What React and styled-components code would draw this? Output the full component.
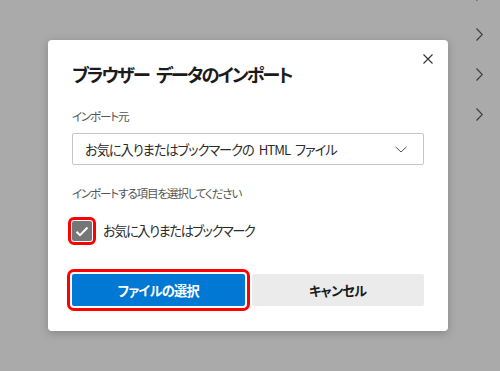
import React from "react";
import styled, { createGlobalStyle } from "styled-components";

const Global = createGlobalStyle`
  html, body { margin: 0; padding: 0; }
  body {
    background: #aaaaaa;
    font-family: "Noto Sans CJK JP", "Noto Sans", sans-serif;
    font-feature-settings: "palt" 1;
    overflow: hidden;
  }
`;

const Page = styled.div`
  width: 500px;
  height: 371px;
  display: flex;
  align-items: flex-start;
`;

const Dialog = styled.div`
  position: relative;
  box-sizing: border-box;
  width: 400px;
  height: 291px;
  margin: 40px 0 0 48px;
  padding: 20px 24px 24px;
  background: #ffffff;
  border-radius: 4px;
  box-shadow: 0 2px 10px rgba(0, 0, 0, 0.22);
  display: flex;
  flex-direction: column;
`;

const Title = styled.h1`
  margin: 0;
  font-size: 18.3px;
  line-height: 28px;
  font-weight: 700;
  color: #1b1b1b;
  letter-spacing: -2px;
  word-spacing: 5px;
`;

const CloseButton = styled.button`
  position: absolute;
  top: 9px;
  right: 11px;
  width: 19px;
  height: 19px;
  padding: 0;
  border: none;
  background: transparent;
  display: flex;
  align-items: center;
  justify-content: center;
  cursor: pointer;
`;

const FieldLabel = styled.div`
  margin-top: ${(p) => p.$top}px;
  font-size: 11.6px;
  line-height: 18px;
  color: #555555;
  letter-spacing: -1.2px;
`;

const Select = styled.div`
  box-sizing: border-box;
  margin-top: 8px;
  height: 32px;
  border: 1px solid #c6c6c6;
  border-radius: 2px;
  display: flex;
  align-items: center;
  justify-content: space-between;
  padding: 0 16px 0 12px;
  font-size: 13.2px;
  letter-spacing: -1px;
  word-spacing: 3px;
  color: #2b2b2b;
`;

const CheckRow = styled.label`
  margin-top: 19px;
  display: flex;
  align-items: center;
  gap: 11px;
  font-size: 13.2px;
  letter-spacing: -1.4px;
  color: #2b2b2b;
  line-height: 20px;
`;

const CheckBox = styled.span`
  box-sizing: border-box;
  width: 20px;
  height: 20px;
  border-radius: 2px;
  background: #767676;
  display: flex;
  align-items: center;
  justify-content: center;
  outline: 3px solid #ff0000;
  outline-offset: 1px;
`;

const Buttons = styled.div`
  margin-top: 33px;
  display: grid;
  grid-template-columns: 1fr 1fr;
  gap: 7px;
`;

const Button = styled.button`
  height: 32px;
  border: none;
  border-radius: 2px;
  font-family: inherit;
  font-feature-settings: "palt" 1;
  font-size: 13.2px;
  letter-spacing: -0.7px;
  font-weight: 700;
  background: ${(p) => (p.$primary ? "#0078d4" : "#ebebeb")};
  color: ${(p) => (p.$primary ? "#ffffff" : "#1b1b1b")};
  outline: ${(p) => (p.$highlight ? "3px solid #ff0000" : "none")};
  outline-offset: 2px;
  padding: 0;
`;

const ChevronList = styled.div`
  margin: -12px 17px 0 auto;
  display: flex;
  flex-direction: column;
  gap: 27px;
`;

const Chevron = () => (
  <svg width="7" height="13" viewBox="0 0 7 13">
    <path d="M0.5 0.5 L6.3 6.5 L0.5 12.5" fill="none" stroke="#3a3a3a" strokeWidth="1.1" />
  </svg>
);

export default function App() {
  return (
    <>
      <Global />
      <Page>
        <Dialog>
          <Title>ブラウザー データのインポート</Title>
          <CloseButton aria-label="閉じる">
            <svg width="10" height="10" viewBox="0 0 10 10">
              <path d="M0.5 0.5 L9.5 9.5 M9.5 0.5 L0.5 9.5" stroke="#333" strokeWidth="1.1" fill="none" />
            </svg>
          </CloseButton>
          <FieldLabel $top={19}>インポート元</FieldLabel>
          <Select>
            <span>お気に入りまたはブックマークの HTML ファイル</span>
            <svg width="12" height="7" viewBox="0 0 12 7">
              <path d="M0.5 0.8 L6 6 L11.5 0.8" fill="none" stroke="#555" strokeWidth="1" />
            </svg>
          </Select>
          <FieldLabel $top={19}>インポートする項目を選択してください</FieldLabel>
          <CheckRow>
            <CheckBox>
              <svg width="14" height="11" viewBox="0 0 14 11">
                <path d="M1.5 5.8 L5 9.2 L12.5 1.5" fill="none" stroke="#ffffff" strokeWidth="2" />
              </svg>
            </CheckBox>
            お気に入りまたはブックマーク
          </CheckRow>
          <Buttons>
            <Button $primary $highlight>ファイルの選択</Button>
            <Button>キャンセル</Button>
          </Buttons>
        </Dialog>
        <ChevronList>
          <Chevron />
          <Chevron />
          <Chevron />
          <Chevron />
        </ChevronList>
      </Page>
    </>
  );
}
